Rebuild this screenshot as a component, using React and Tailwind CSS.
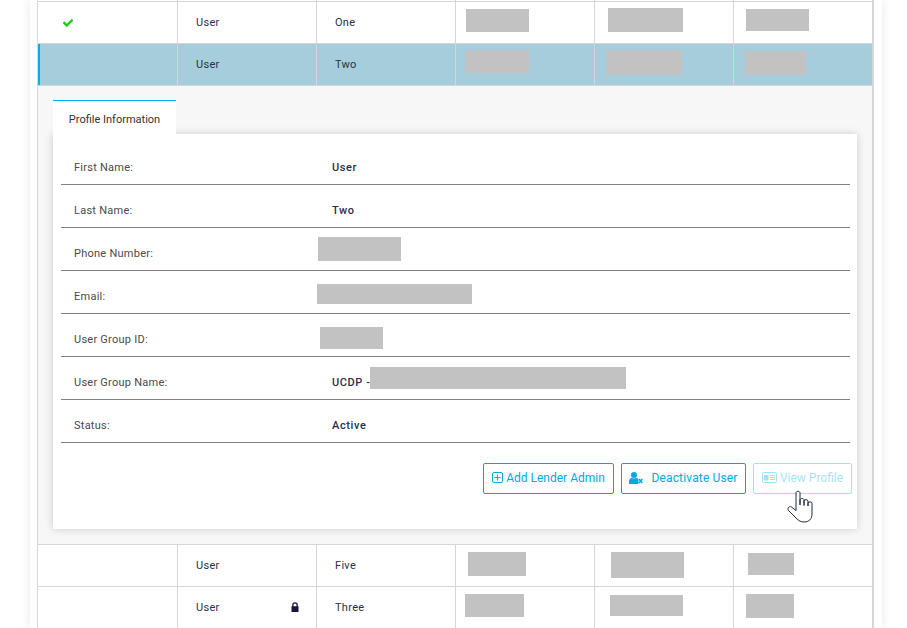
import { FaCheck } from "react-icons/fa";

const rowGrid = "grid grid-cols-[140px_139px_139px_139px_139px_138px] h-[42px] border-b border-[#d6d6d6]";
const cellCls = "relative flex items-center pl-[18px] pt-[2px] border-r border-[#d6d6d6] last:border-r-0 text-[11px] tracking-[0.3px] text-[#2a3046]";
const btnCls = "flex items-center justify-center h-[31px] pb-[2px] rounded-[2px] border border-[#1b9cc2]";

function Redact({ className }) {
	return <div className={"absolute bg-[#c2c2c2] " + className} />;
}

function ProfileRow({ label, value, children }) {
	return (
		<div className="relative h-[43px] flex items-end pb-[8px] border-b border-[#808080] text-[11px]">
			<div className="w-[271px] pl-[13px] text-[#4a4a4a] tracking-[0.25px]">{label}</div>
			<div className="font-medium text-[#2a3046] tracking-[0.6px]">{value}</div>
			{children}
		</div>
	);
}

export default function App() {
	return (
		<div className="h-[628px] overflow-hidden bg-white font-['Roboto',sans-serif]">
			<div className="ml-[30px] w-[852px] h-[628px] bg-white shadow-[0_0_10px_rgba(0,0,0,0.1)] pl-[7px]">
				<div className="w-[837px] border-l border-r-2 border-[#d6d6d6] h-[628px]">
					{/* Top stub of the previous row */}
					<div className="grid grid-cols-[140px_139px_139px_139px_139px_138px] h-[2px] border-b border-[#d6d6d6]">
						<div className="border-r border-[#d6d6d6]" />
						<div className="border-r border-[#d6d6d6]" />
						<div className="border-r border-[#d6d6d6]" />
						<div className="border-r border-[#d6d6d6]" />
						<div className="border-r border-[#d6d6d6]" />
						<div />
					</div>

					{/* Row one */}
					<div className={rowGrid}>
						<div className={cellCls + " pl-[25px] !pt-0"}>
							<FaCheck className="text-[#12d012] text-[10px] stroke-[30px]" />
						</div>
						<div className={cellCls}>User</div>
						<div className={cellCls}>One</div>
						<div className={cellCls}>
							<Redact className="left-[10px] top-[7px] w-[63px] h-[23px]" />
						</div>
						<div className={cellCls}>
							<Redact className="left-[13px] top-[6px] w-[75px] h-[24px]" />
						</div>
						<div className={cellCls}>
							<Redact className="left-[12px] top-[7px] w-[63px] h-[22px]" />
						</div>
					</div>

					{/* Row two, selected */}
					<div className={rowGrid + " bg-[#a5cddb]"}>
						<div className={cellCls + " border-l-2 border-l-[#00b0e6]"} />
						<div className={cellCls}>User</div>
						<div className={cellCls}>Two</div>
						<div className={cellCls}>
							<Redact className="left-[9px] top-[6px] w-[64px] h-[23px]" />
						</div>
						<div className={cellCls}>
							<Redact className="left-[11px] top-[6px] w-[76px] h-[25px]" />
						</div>
						<div className={cellCls}>
							<Redact className="left-[11px] top-[7px] w-[61px] h-[24px]" />
						</div>
					</div>

					{/* Expanded detail */}
					<div className="h-[459px] bg-[#f7f7f7] border-b border-[#d6d6d6] pt-[14px] pl-[15px]">
						<div className="relative z-10 w-[123px] h-[34px] pt-[5px] bg-white border-t border-[#00b0e6] flex items-center justify-center text-[11px] text-[#333333]">
							Profile Information
						</div>
						<div className="w-[804px] h-[395px] bg-white shadow-[0_0_8px_rgba(0,0,0,0.18)] pt-[8px] pl-[8px] pr-[7px]">
							<ProfileRow label="First Name:" value="User" />
							<ProfileRow label="Last Name:" value="Two" />
							<ProfileRow label="Phone Number:">
								<Redact className="left-[257px] top-[9px] w-[83px] h-[24px]" />
							</ProfileRow>
							<ProfileRow label="Email:">
								<Redact className="left-[256px] top-[13px] w-[155px] h-[20px]" />
							</ProfileRow>
							<ProfileRow label="User Group ID:">
								<Redact className="left-[259px] top-[13px] w-[63px] h-[22px]" />
							</ProfileRow>
							<ProfileRow label="User Group Name:" value="UCDP -">
								<Redact className="left-[309px] top-[10px] w-[256px] h-[22px]" />
							</ProfileRow>
							<ProfileRow label="Status:" value="Active" />

							<div className="relative flex justify-end gap-[7px] mt-[20px] -mr-[2px] text-[12px] text-[#00a9e0]">
								<button className={btnCls + " gap-[3px] w-[131px]"}>
									<svg className="w-[11px] h-[11px]" viewBox="0 0 11 11" fill="none" stroke="currentColor" strokeWidth="1">
										<rect x="0.5" y="0.5" width="10" height="10" rx="1.5" />
										<path d="M5.5 2.5V8.5M2.5 5.5H8.5" />
									</svg>
									Add Lender Admin
								</button>
								<button className={btnCls + " gap-[8px] w-[125px] tracking-[0.15px]"}>
									<svg className="w-[14px] h-[12px]" viewBox="0 0 14 12" fill="currentColor">
										<circle cx="5" cy="3" r="3" />
										<path d="M0 12V9.5C0 7.5 1.2 6.2 2.8 5.8C4 6.8 6 6.8 7.2 5.8C8.2 6 9 6.6 9.5 7.4V12Z" />
										<path d="M10 7L13.5 11M13.5 7L10 11" fill="none" stroke="currentColor" strokeWidth="1.5" />
									</svg>
									Deactivate User
								</button>
								<button className={btnCls + " gap-[3px] w-[99px] opacity-35"}>
									<svg className="w-[15px] h-[11px]" viewBox="0 0 15 11" fill="currentColor">
										<rect x="0.5" y="0.5" width="14" height="10" rx="1" fill="none" stroke="currentColor" />
										<rect x="2" y="3" width="4.5" height="5.5" />
										<path d="M8 3.5H13M8 5.5H13M8 7.5H13" fill="none" stroke="currentColor" />
									</svg>
									View Profile
								</button>

								{/* Hand cursor */}
								<svg className="absolute right-[39px] top-[27px] w-[26px] h-[33px]" viewBox="0 0 26 33" fill="#ffffff" stroke="#23283c" strokeWidth="1" strokeLinejoin="round">
									<path d="M9 20.5V3C9 0.8 13 0.8 13 3V15V10C13 8 17 8 17 10V15.5V11C17 9.2 21 9.2 21 11V16V13C21 11.5 25 11.5 25 13V24C25 29 22 32 17 32C13 32 11 30 8 27L1.5 20.5C0 18.5 2 15.5 4.5 17Z" />
								</svg>
							</div>
						</div>
					</div>

					{/* Row five */}
					<div className={rowGrid}>
						<div className={cellCls} />
						<div className={cellCls}>User</div>
						<div className={cellCls}>Five</div>
						<div className={cellCls}>
							<Redact className="left-[12px] top-[7px] w-[58px] h-[24px]" />
						</div>
						<div className={cellCls}>
							<Redact className="left-[16px] top-[7px] w-[73px] h-[26px]" />
						</div>
						<div className={cellCls}>
							<Redact className="left-[14px] top-[8px] w-[46px] h-[22px]" />
						</div>
					</div>

					{/* Row three */}
					<div className={rowGrid}>
						<div className={cellCls} />
						<div className={cellCls}>
							User
							<svg className="absolute left-[113px] top-[15px] w-[8px] h-[10px]" viewBox="0 0 8 10" fill="#14193a">
								<path d="M1.2 4.2V3A2.8 2.8 0 0 1 6.8 3V4.2H7.5V10H0.5V4.2ZM2.5 4.2H5.5V3A1.5 1.5 0 0 0 2.5 3Z" fillRule="evenodd" />
							</svg>
						</div>
						<div className={cellCls}>Three</div>
						<div className={cellCls}>
							<Redact className="left-[9px] top-[7px] w-[59px] h-[23px]" />
						</div>
						<div className={cellCls}>
							<Redact className="left-[15px] top-[8px] w-[73px] h-[21px]" />
						</div>
						<div className={cellCls}>
							<Redact className="left-[12px] top-[7px] w-[48px] h-[24px]" />
						</div>
					</div>
				</div>
			</div>
		</div>
	);
}
